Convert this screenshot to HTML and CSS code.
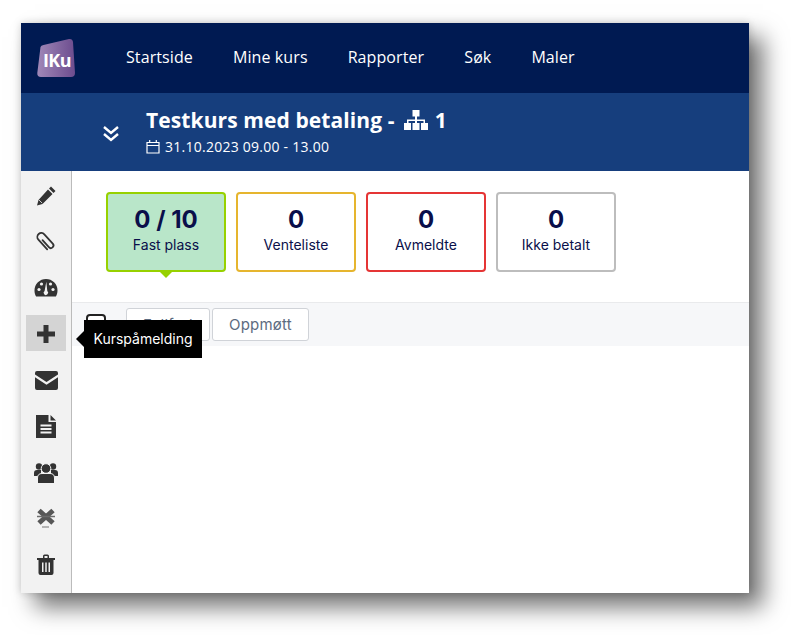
FILE: index.html
```html
<!DOCTYPE html>
<html lang="nb">
<head>
<meta charset="utf-8">
<title>Testkurs med betaling</title>
<link rel="stylesheet" href="styles.css">
</head>
<body>
<div class="window">
  <header class="topnav">
    <svg class="logo" viewBox="0 0 38 40" width="38" height="40" aria-hidden="true">
      <defs><linearGradient id="lg" x1="0" x2="1" y1="0" y2="0"><stop offset="0" stop-color="#a088b8"/><stop offset="1" stop-color="#6c4c8e"/></linearGradient></defs>
      <path d="M3.500 9 Q4 7.500 6.500 7 L32 1 Q35.500 .5 36 4 L38 35 Q38 39 34 39 L4 39 Q0 39 .3 35 Z" fill="url(#lg)"/>
      <text x="6" y="28.500" class="logo-text">IKu</text>
    </svg>
    <nav class="menu">
      <a>Startside</a><a>Mine kurs</a><a>Rapporter</a><a>Søk</a><a>Maler</a>
    </nav>
  </header>
  <section class="subhead">
    <svg class="chev" viewBox="0 0 18 17" width="18" height="17" aria-hidden="true"><path d="M2 2l7 6 7-6M2 9l7 6 7-6" fill="none" stroke="#fff" stroke-width="2.400"/></svg>
    <div class="titles">
      <h1>Testkurs med betaling - <svg class="tree" viewBox="0 0 24 20" width="24" height="20" aria-hidden="true"><path d="M8.500 0h7v6.500h-2.500v3h8v3.500h3v7h-7v-7h2.500v-2H13v2h2.500v7h-7v-7H11v-2H4.500v2H7v7H0v-7h3V9.500h8v-3H8.500z" fill="#fff"/></svg> 1</h1>
      <p class="date"><svg viewBox="0 0 14 15" width="14" height="15" aria-hidden="true"><path d="M1 3.500h12v10.500H1zM1 6.500h12M3.700 1v3M10.300 1v3" fill="none" stroke="#fff" stroke-width="1.200"/></svg>31.10.2023 09.00 - 13.00</p>
    </div>
  </section>
  <div class="body">
    <aside class="side">
      <button class="tool"><svg viewBox="0 0 20 20" width="20" height="20"><path d="M15 .5l4.500 4.500-2 2-4.500-4.500zM12 3.500l4.500 4.500-10 10-5.500 1.500 1.500-5.500z" fill="#333"/><path d="M3 14l3.200 3.200" stroke="#f2f2f2" stroke-width=".8"/></svg></button>
      <button class="tool"><svg viewBox="-12 -12 24 24" width="24" height="24"><path d="M-1.300 -3.500V5.500a2.500 2.500 0 0 0 5 0V-6.500a3.800 3.800 0 0 0-7.600 0V6" transform="rotate(-42) scale(1.050)" fill="none" stroke="#333" stroke-width="1.700" stroke-linecap="round"/></svg></button>
      <button class="tool"><svg viewBox="0 0 24 20" width="24" height="20"><path d="M12 1a11.500 11.500 0 0 0-11.500 11.500c0 2.200.6 4.300 1.600 6h19.800c1-1.700 1.600-3.800 1.600-6A11.500 11.500 0 0 0 12 1z" fill="#333"/><circle cx="5" cy="11.500" r="1.600" fill="#f2f2f2"/><circle cx="7.500" cy="6" r="1.600" fill="#f2f2f2"/><circle cx="16.500" cy="6" r="1.600" fill="#f2f2f2"/><circle cx="19" cy="11.500" r="1.600" fill="#f2f2f2"/><path d="M12.300 3.800l-1.700 9.200a2.200 2.200 0 1 0 2.700.1z" fill="#f2f2f2"/></svg></button>
      <button class="tool tool-on"><svg viewBox="0 0 18 18" width="18" height="18"><path d="M6.500 0h5v6.500H18v5h-6.500V18h-5v-6.500H0v-5h6.500z" fill="#333"/></svg></button>
      <button class="tool"><svg viewBox="0 0 23 19" width="23" height="19"><path d="M2 0h19a2 2 0 0 1 2 2v1.500l-11.500 7.500L0 3.500V2a2 2 0 0 1 2-2zM0 6.200l11.500 7.500L23 6.200V17a2 2 0 0 1-2 2H2a2 2 0 0 1-2-2z" fill="#333"/></svg></button>
      <button class="tool"><svg viewBox="0 0 20 23" width="20" height="23"><path d="M0 0h12.500v7H20v16H0zM14.500 0l5.500 5.500h-5.500z" fill="#333"/><path d="M4.500 10.500h11M4.500 14h11M4.500 17.500h11" stroke="#f2f2f2" stroke-width="1.800"/></svg></button>
      <button class="tool"><svg viewBox="0 0 24 22" width="24" height="22"><circle cx="5" cy="5.500" r="3.200" fill="#333"/><circle cx="19" cy="5.500" r="3.200" fill="#333"/><path d="M0 15v-3q0-3 3-3h4v6zM24 15v-3q0-3-3-3h-4v6z" fill="#333"/><circle cx="12" cy="7.500" r="4.800" fill="#333" stroke="#f2f2f2" stroke-width="1"/><path d="M3.500 22v-5q0-4.500 4.500-4.500h8q4.500 0 4.500 4.500v5q0 .5-1 .5H4.500q-1 0-1-.5z" fill="#333" stroke="#f2f2f2" stroke-width="1"/></svg></button>
      <button class="tool tool-off"><svg viewBox="0 0 20 20" width="20" height="20"><path d="M3 2.500L17 15M17 2.500L3 15" stroke="#3c3c3c" stroke-width="5"/><path d="M1 8.500h18" stroke="#555" stroke-width="1.500"/><path d="M6 19h7" stroke="#777" stroke-width="1.200"/></svg></button>
      <button class="tool"><svg viewBox="0 0 18 21" width="18" height="21"><path d="M0 4h18v2H0zM6 4V2q0-1.500 1.500-1.500h3Q12 .5 12 2v2h-1.500V2h-3v2z" fill="#333"/><path d="M1.500 6h15v13q0 2-2 2h-11q-2 0-2-2zM5 8.500v9.500h1.500V8.500zM8.250 8.500v9.500h1.500V8.500zM11.500 8.500v9.500H13V8.500z" fill="#333" fill-rule="evenodd"/></svg></button>
    </aside>
    <main class="content">
      <div class="stats">
        <div class="stat stat-green"><b>0 / 10</b><span>Fast plass</span></div>
        <div class="stat stat-yellow"><b>0</b><span>Venteliste</span></div>
        <div class="stat stat-red"><b>0</b><span>Avmeldte</span></div>
        <div class="stat stat-grey"><b>0</b><span>Ikke betalt</span></div>
      </div>
      <div class="filters">
        <span class="check"></span>
        <button class="btn btn-first">Fullført</button>
        <button class="btn">Oppmøtt</button>
      </div>
    </main>
  </div>
  <div class="tooltip">Kurspåmelding</div>
</div>
</body>
</html>
```
FILE: styles.css
```css
* { box-sizing: border-box; }
html, body { margin: 0; height: 100%; background: #fff; overflow: hidden; }
body { padding: 23px 42px 42px 21px; font-family: Inter, "Liberation Sans", sans-serif; }
.window {
  position: relative;
  width: 728px;
  height: 570px;
  background: #fff;
  display: flex;
  flex-direction: column;
  box-shadow: 14px 14px 22px rgba(0,0,0,.55), 0 0 8px rgba(0,0,0,.18);
}
.topnav { height: 70px; background: #001a52; display: flex; align-items: center; padding-left: 16px; }
.logo { flex: none; }
.logo-text { font: 700 18px "Open Sans", sans-serif; letter-spacing: -.6px; fill: #fff; }
.menu { display: flex; gap: 40px; margin: -3px 0 0 51px; font: 400 16px "Open Sans", sans-serif; letter-spacing: .1px; color: #fff; }
.subhead { height: 78px; background: #163e7d; display: flex; align-items: center; padding-left: 81px; color: #fff; }
.chev { flex: none; margin-top: 2px; }
.titles { margin-left: 26px; }
h1 { margin: -3px 0 0; font: 700 21px/28px "Open Sans", sans-serif; letter-spacing: .1px; color: #fff; white-space: nowrap; }
.tree { vertical-align: -2px; margin: 0 1px 0 4px; }
.date { margin: 4px 0 0; display: flex; align-items: center; gap: 5px; font: 400 14px/18px "Open Sans", sans-serif; letter-spacing: .25px; }
.body { flex: 1; display: flex; min-height: 0; }
.side {
  width: 51px;
  background: #f2f2f2;
  border-right: 1px solid #bbb;
  padding: 6px 5px 0;
  display: flex;
  flex-direction: column;
  gap: 10px;
}
.tool { width: 40px; height: 36px; padding: 0; border: 0; background: none; display: flex; align-items: center; justify-content: center; }
.tool svg { margin-top: 2px; }
.tool-on { background: #d4d4d4; }
.tool-off svg { filter: blur(.6px); opacity: .85; }
.content { flex: 1; min-width: 0; }
.stats { display: flex; gap: 10px; padding: 21px 0 0 34px; height: 131px; }
.stat { position: relative; width: 120px; height: 80px; border: 2px solid #bdbdbd; border-radius: 4px; display: flex; flex-direction: column; align-items: center; color: #0a0f4a; padding-top: 11px; }
.stat b { font-size: 24px; line-height: 29px; font-weight: 700; }
.stat span { font-size: 14px; line-height: 20px; margin-top: 1px; }
.stat-green { background: #b9e6c9; border-color: #97d100; }
.stat-green::after { content: ""; position: absolute; left: 50%; top: 100%; margin: 0 0 0 -8px; border: 8px solid transparent; border-top-color: #97d100; border-bottom: 0; }
.stat-yellow { border-color: #e6b52e; }
.stat-red { border-color: #e53535; }
.filters { height: 44px; background: #f6f7f9; border-top: 1px solid #e9eaec; display: flex; align-items: flex-start; padding: 5px 0 0 14px; }
.check { width: 20px; height: 20px; margin: 6px 20px 0 0; border: 2px solid #222; border-radius: 4px; background: #fff; }
.btn { height: 33px; padding: 0 16px; background: #fff; border: 1px solid #d0d3d8; border-radius: 3px; font: 400 15px Inter, sans-serif; letter-spacing: .2px; color: #5c6b80; }
.btn-first { width: 84px; margin-right: 2px; }
.tooltip { position: absolute; left: 63px; top: 297px; width: 118px; height: 38px; background: #000; color: #fff; font-size: 14px; line-height: 38px; text-align: center; }
.tooltip::before { content: ""; position: absolute; right: 100%; top: 50%; margin-top: -8px; border: 8px solid transparent; border-right-color: #000; border-left: 0; }
```
